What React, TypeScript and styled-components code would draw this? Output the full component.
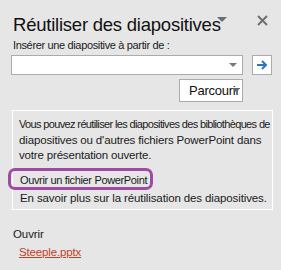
import React from "react";
import styled, { createGlobalStyle } from "styled-components";

const Global = createGlobalStyle`
  html, body { margin: 0; padding: 0; background: #e6e6e6; }
  body { font-family: "Liberation Sans", Arial, sans-serif; color: #1a1a1a; }
`;

const Pane = styled.div`
  width: 281px;
  height: 270px;
  box-sizing: border-box;
  padding: 14px 9px 0 11px;
  display: flex;
  flex-direction: column;
`;

const Header = styled.div`
  display: flex;
  align-items: flex-start;
  justify-content: space-between;
  height: 24px;
`;

const TitleWrap = styled.div`
  display: flex;
  align-items: flex-start;
  padding-left: 2px;
`;

const Title = styled.h1`
  margin: 0;
  font-size: 18.5px;
  font-weight: normal;
  line-height: 22px;
  color: #111;
  letter-spacing: -0.23px;
  white-space: nowrap;
`;

const TitleCaret = styled.span`
  width: 0;
  height: 0;
  margin-top: 3px;
  margin-left: -4px;
  border-left: 5px solid transparent;
  border-right: 5px solid transparent;
  border-top: 5px solid #6d6d6d;
`;

const Close = styled.button`
  border: none;
  background: transparent;
  padding: 0;
  margin-top: 1px;
  margin-right: 4px;
  width: 11px;
  height: 11px;
  display: flex;
  align-items: center;
  justify-content: center;
`;

const Label = styled.div`
  font-size: 11px;
  line-height: 15px;
  padding-left: 2px;
  letter-spacing: -0.35px;
  color: #1a1a1a;
  white-space: nowrap;
`;

const ComboRow = styled.div`
  display: flex;
  align-items: center;
  gap: 9px;
  margin-top: 2px;
`;

const Combo = styled.div`
  width: 233px;
  height: 20px;
  box-sizing: border-box;
  border: 1px solid #ababab;
  background: #fff;
  display: flex;
  align-items: center;
  justify-content: flex-end;
  padding-right: 5px;
`;

const SmallCaret = styled.span`
  width: 0;
  height: 0;
  border-left: 4px solid transparent;
  border-right: 4px solid transparent;
  border-top: 4px solid #777;
`;

const GoButton = styled.button`
  width: 20px;
  height: 20px;
  box-sizing: border-box;
  border: 1px solid #ababab;
  background: #fff;
  padding: 0;
  display: flex;
  align-items: center;
  justify-content: center;
`;

const BrowseRow = styled.div`
  display: flex;
  justify-content: flex-end;
  padding-right: 29px;
  margin-top: 4px;
`;

const Browse = styled.button`
  position: relative;
  width: 64px;
  height: 23px;
  box-sizing: border-box;
  border: 1px solid #ababab;
  background: #fff;
  padding: 0 0 0 9px;
  text-align: left;
  font-family: "Liberation Sans", Arial, sans-serif;
  font-size: 13px;
  letter-spacing: -0.25px;
  color: #111;
  overflow: hidden;
  white-space: nowrap;
`;

const BrowseCaret = styled.span`
  position: absolute;
  right: 2px;
  top: 8px;
  width: 0;
  height: 0;
  border-left: 4px solid transparent;
  border-right: 4px solid transparent;
  border-top: 4px solid #666;
`;

const InfoBox = styled.div`
  margin-top: 8px;
  margin-left: 1px;
  width: 261px;
  height: 100px;
  box-sizing: border-box;
  border: 1px solid #fff;
  padding: 6px 0 0 6px;
  position: relative;
`;

const InfoLine = styled.div<{ $size: number; $spacing: number }>`
  font-size: ${(p) => p.$size}px;
  line-height: 15.5px;
  letter-spacing: ${(p) => p.$spacing}px;
  color: #1a1a1a;
  white-space: nowrap;
`;

const LinkLine = styled.div<{ $top: number; $size: number; $spacing: number }>`
  font-size: ${(p) => p.$size}px;
  line-height: 16px;
  letter-spacing: ${(p) => p.$spacing}px;
  color: #1a1a1a;
  margin-top: ${(p) => p.$top}px;
  padding-left: 1px;
  white-space: nowrap;
`;

const Highlight = styled.span`
  position: absolute;
  left: -5px;
  top: 57px;
  width: 145px;
  height: 22px;
  box-sizing: border-box;
  border: 3px solid #a04ba3;
  border-radius: 7px;
`;

const OpenLabel = styled.div`
  margin-top: 16px;
  padding-left: 2px;
  font-size: 11.5px;
  line-height: 16px;
  letter-spacing: -0.1px;
  color: #1a1a1a;
`;

const FileLink = styled.a`
  display: inline-block;
  margin-top: 2px;
  margin-left: 8px;
  font-size: 11.5px;
  line-height: 16px;
  letter-spacing: -0.15px;
  color: #c2401f;
  text-decoration: underline;
`;

export default function App() {
  return (
    <>
      <Global />
      <Pane>
        <Header>
          <TitleWrap>
            <Title>Réutiliser des diapositives</Title>
            <TitleCaret />
          </TitleWrap>
          <Close aria-label="Fermer">
            <svg width="11" height="11" viewBox="0 0 11 11">
              <path d="M1 1 L10 10 M10 1 L1 10" stroke="#6f6f6f" strokeWidth="2" />
            </svg>
          </Close>
        </Header>
        <Label>Insérer une diapositive à partir de :</Label>
        <ComboRow>
          <Combo>
            <SmallCaret />
          </Combo>
          <GoButton aria-label="Aller">
            <svg width="12" height="10" viewBox="0 0 12 10">
              <path d="M1 5 H10 M6 1 L10 5 L6 9" stroke="#2e74c4" strokeWidth="2" fill="none" />
            </svg>
          </GoButton>
        </ComboRow>
        <BrowseRow>
          <Browse>
            Parcourir
            <BrowseCaret />
          </Browse>
        </BrowseRow>
        <InfoBox>
          <InfoLine $size={11} $spacing={-0.64}>Vous pouvez réutiliser les diapositives des bibliothèques de</InfoLine>
          <InfoLine $size={11.5} $spacing={-0.15}>diapositives ou d'autres fichiers PowerPoint dans</InfoLine>
          <InfoLine $size={11.5} $spacing={-0.17}>votre présentation ouverte.</InfoLine>
          <LinkLine $top={8} $size={11} $spacing={-0.35}>Ouvrir un fichier PowerPoint</LinkLine>
          <LinkLine $top={2} $size={11.5} $spacing={-0.12}>En savoir plus sur la réutilisation des diapositives.</LinkLine>
          <Highlight />
        </InfoBox>
        <OpenLabel>Ouvrir</OpenLabel>
        <div>
          <FileLink href="#">Steeple.pptx</FileLink>
        </div>
      </Pane>
    </>
  );
}
